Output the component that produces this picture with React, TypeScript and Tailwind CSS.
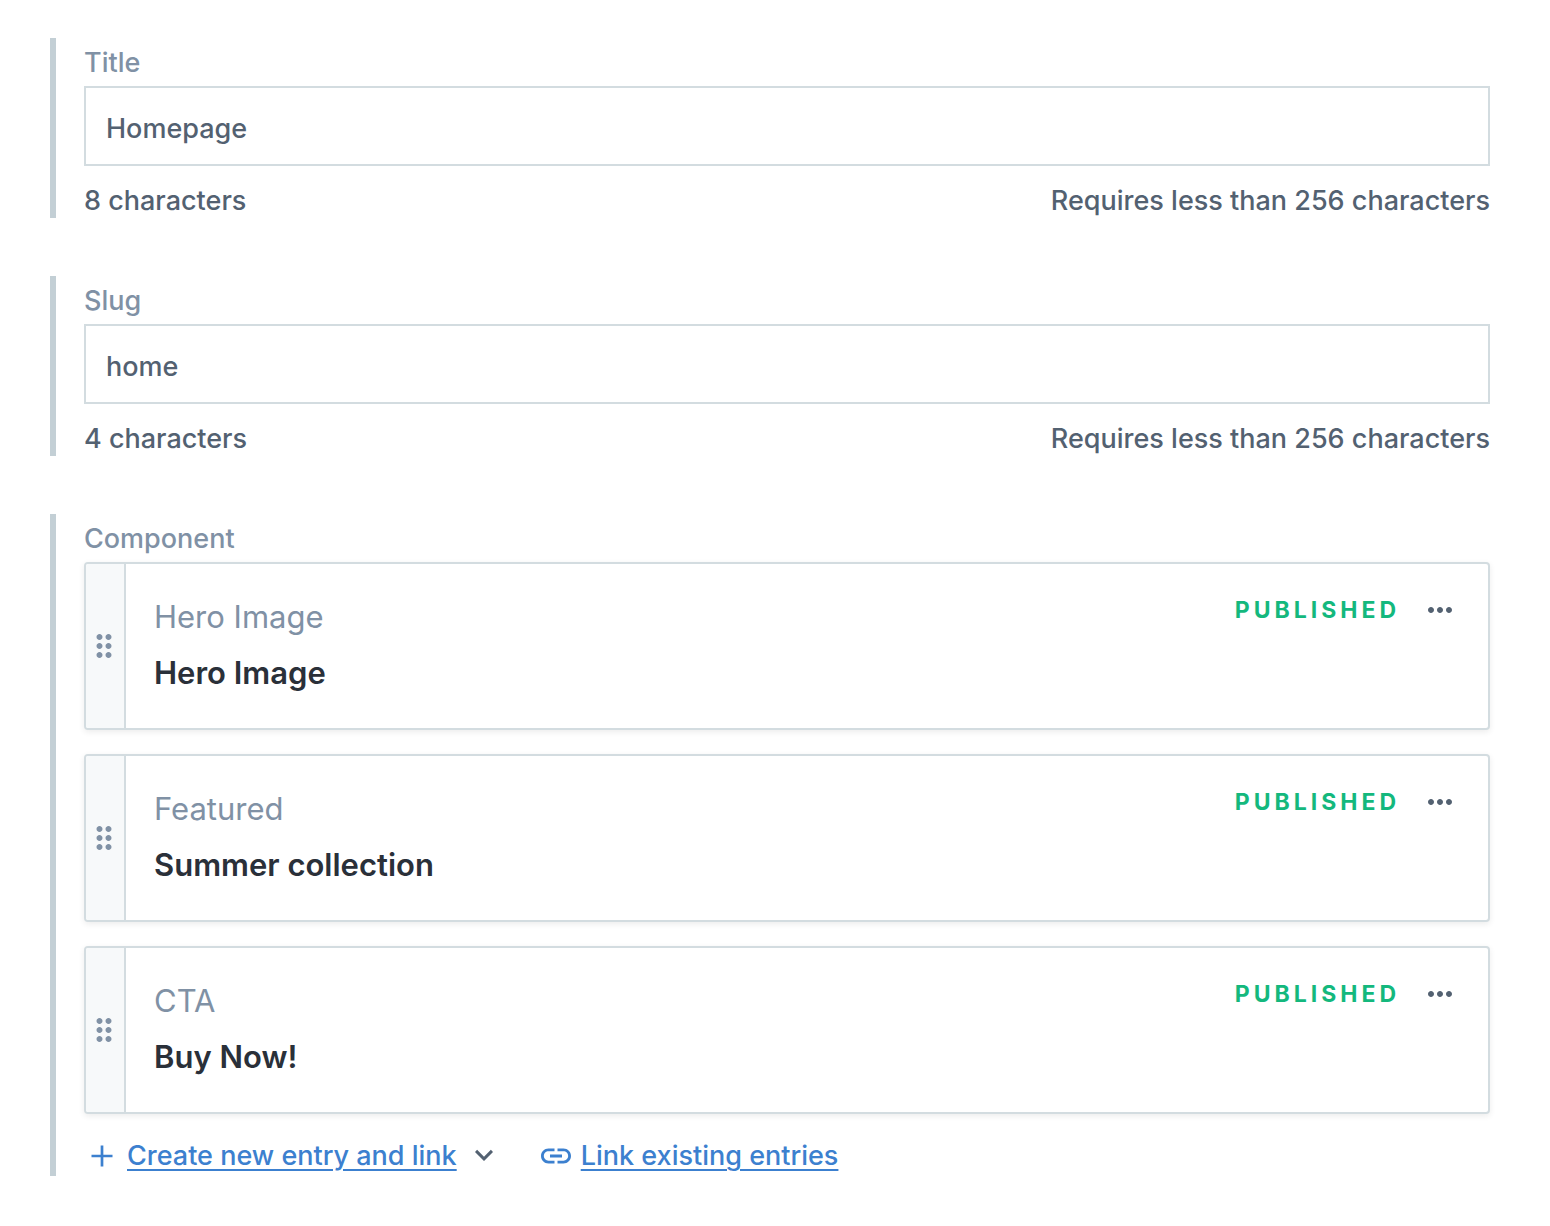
import { useState } from 'react';

function IconPath({ d, className }: { d: string; className: string }) {
  return (
    <svg viewBox="0 0 24 24" className={className} fill="currentColor" aria-hidden="true">
      <path d={d} />
    </svg>
  );
}

const PLUS = 'M19 12.9h-6.1V19h-1.8v-6.1H5v-1.8h6.1V5h1.8v6.1H19z';
const CHEVRON = 'M7.41 7.84 12 12.42l4.59-4.58L18 9.25l-6 6-6-6z';
const LINK =
  'M3.9 12c0-1.71 1.39-3.1 3.1-3.1h4V7H7c-2.76 0-5 2.24-5 5s2.24 5 5 5h4v-1.9H7c-1.71 0-3.1-1.39-3.1-3.1zM8 13h8v-2H8v2zm9-6h-4v1.9h4c1.71 0 3.1 1.39 3.1 3.1s-1.39 3.1-3.1 3.1h-4V17h4c2.76 0 5-2.24 5-5s-2.24-5-5-5z';
const MORE =
  'M6 10c-1.1 0-2 .9-2 2s.9 2 2 2 2-.9 2-2-.9-2-2-2zm12 0c-1.1 0-2 .9-2 2s.9 2 2 2 2-.9 2-2-.9-2-2-2zm-6 0c-1.1 0-2 .9-2 2s.9 2 2 2 2-.9 2-2-.9-2-2-2z';
const GRIP =
  'M11 18c0 1.1-.9 2-2 2s-2-.9-2-2 .9-2 2-2 2 .9 2 2zm-2-8c-1.1 0-2 .9-2 2s.9 2 2 2 2-.9 2-2-.9-2-2-2zm0-6c-1.1 0-2 .9-2 2s.9 2 2 2 2-.9 2-2-.9-2-2-2zm6 4c1.1 0 2-.9 2-2s-.9-2-2-2-2 .9-2 2 .9 2 2 2zm0 2c-1.1 0-2 .9-2 2s.9 2 2 2 2-.9 2-2-.9-2-2-2zm0 6c-1.1 0-2 .9-2 2s.9 2 2 2 2-.9 2-2-.9-2-2-2z';

const MAX_LENGTH = 256;

function TextField({ id, label, initial }: { id: string; label: string; initial: string }) {
  const [value, setValue] = useState(initial);
  return (
    <div className="border-l-6 border-[#c3cfd5] pl-7">
      <label htmlFor={id} className="block pt-0.5 leading-[46px] text-[#8091a5]">
        {label}
      </label>
      <input
        id={id}
        type="text"
        value={value}
        onChange={(e) => setValue(e.target.value)}
        className="block h-20 w-full border-2 border-[#d3dce0] bg-white px-5 pt-1 text-[#536171] outline-none focus:border-[#3c80cf]"
      />
      <div className="flex justify-between pt-[18px] leading-[34px] text-[#536171]">
        <span>{value.length} characters</span>
        <span>Requires less than {MAX_LENGTH} characters</span>
      </div>
    </div>
  );
}

function EntryCard({ type, title }: { type: string; title: string }) {
  return (
    <li className="flex overflow-hidden rounded border-2 border-[#d3dce0] bg-white shadow-[0_2px_6px_rgba(0,0,0,0.08)]">
      <button
        type="button"
        aria-label={`Reorder ${title}`}
        className="flex w-10 shrink-0 cursor-grab items-center justify-center border-r-2 border-[#d3dce0] bg-[#f7f9fa] pr-0.5 text-[#8091a5]"
      >
        <IconPath d={GRIP} className="size-9 shrink-0" />
      </button>
      <div className="flex grow items-start justify-between pt-[25px] pr-[30px] pb-[27px] pl-7">
        <div className="text-[31px] leading-14">
          <p className="font-normal text-[#8091a5]">{type}</p>
          <h3 className="font-semibold text-[#2a3039]">{title}</h3>
        </div>
        <div className="flex h-[42px] items-center gap-[22px]">
          <span className="text-[23px] font-bold tracking-[4px] text-[#14b87d]">PUBLISHED</span>
          <button type="button" aria-label={`Actions for ${title}`} className="text-[#536171]">
            <IconPath d={MORE} className="size-9" />
          </button>
        </div>
      </div>
    </li>
  );
}

const entries = [
  { type: 'Hero Image', title: 'Hero Image' },
  { type: 'Featured', title: 'Summer collection' },
  { type: 'CTA', title: 'Buy Now!' },
];

export default function App() {
  return (
    <main className="flex min-h-screen flex-col gap-[58px] bg-white pt-[38px] pr-[60px] pb-[50px] pl-[50px] font-['Inter',sans-serif] text-[27px] font-[450]">
      <TextField id="title" label="Title" initial="Homepage" />
      <TextField id="slug" label="Slug" initial="home" />
      <section aria-labelledby="component-label" className="border-l-6 border-[#c3cfd5] pl-7">
        <h2 id="component-label" className="pt-0.5 font-[450] leading-[46px] text-[#8091a5]">
          Component
        </h2>
        <ul className="flex flex-col gap-6">
          {entries.map((entry) => (
            <EntryCard key={entry.title} type={entry.type} title={entry.title} />
          ))}
        </ul>
        <div className="flex items-center pt-6 pb-0.5 leading-9 text-[#3c80cf]">
          <IconPath d={PLUS} className="size-9 shrink-0" />
          <a href="#create" className="ml-[7px] underline decoration-2 underline-offset-4">
            Create new entry and link
          </a>
          <button type="button" aria-label="Choose entry type" className="ml-[9px] text-[#536171]">
            <IconPath d={CHEVRON} className="size-9" />
          </button>
          <IconPath d={LINK} className="ml-9 size-9 shrink-0" />
          <a href="#existing" className="ml-[7px] underline decoration-2 underline-offset-4">
            Link existing entries
          </a>
        </div>
      </section>
    </main>
  );
}
